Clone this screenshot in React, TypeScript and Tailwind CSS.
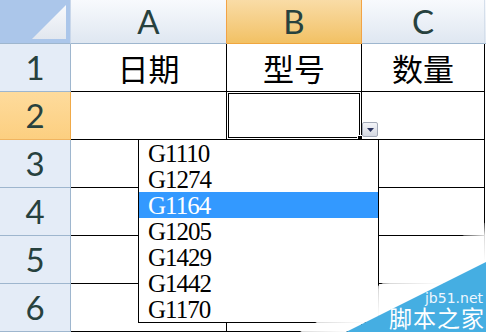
import React from "react";

const items = ["G1110", "G1274", "G1164", "G1205", "G1429", "G1442", "G1170"];

const hdrFont = { fontFamily: "Lato, 'Open Sans', sans-serif" } as React.CSSProperties;

function RowHeader({ n, sel }: { n: number; sel?: boolean }) {
  return (
    <div
      className={
        "flex items-center justify-center border-r border-b text-[33px] leading-none text-[#27413e] " +
        (sel
          ? "bg-gradient-to-b from-[#fedb9c] to-[#fccf80] border-r-[#f0a948] border-b-[#f0b460]"
          : "bg-[#e4ecf7] border-r-[#9eb6ce] border-b-[#9eb6ce]")
      }
      style={hdrFont}
    >
      {n}
    </div>
  );
}

function Cell({ children }: { children?: React.ReactNode }) {
  return (
    <div
      className="flex items-center justify-center border-r border-b border-black bg-white text-[31px] leading-none text-black"
      style={{ fontFamily: "'Noto Sans CJK SC', sans-serif" }}
    >
      {children}
    </div>
  );
}

export default function App() {
  return (
    <div className="relative w-[486px] h-[332px] overflow-hidden bg-white">
      <div className="grid grid-cols-[71px_156px_135px_123px_1fr] grid-rows-[44px_repeat(6,48px)]">
        {/* corner */}
        <div className="relative border-r border-b border-r-[#c9d7ea] border-b-[#9eb6ce] bg-[#abc6ea]">
          <svg className="absolute left-0 top-0" width="70" height="43" viewBox="0 0 70 43">
            <defs>
              <linearGradient id="tri" x1="0" y1="0" x2="0" y2="1">
                <stop offset="0" stopColor="#f7f9fc" />
                <stop offset="1" stopColor="#e2e7ef" />
              </linearGradient>
            </defs>
            <polygon points="32,39 66,5 66,39" fill="url(#tri)" />
          </svg>
        </div>
        {/* column headers */}
        <div
          className="flex items-center justify-center border-b border-r border-b-[#9eb6ce] border-r-[#f2a345] bg-gradient-to-b from-[#f8fafd] to-[#dfe7f1] text-[33px] leading-none text-[#27413e]"
          style={hdrFont}
        >
          A
        </div>
        <div
          className="flex items-center justify-center border-b border-r border-b-[#f0a63f] border-r-[#f2a345] bg-gradient-to-b from-[#f9dca6] to-[#f2c163] text-[33px] leading-none text-[#27413e]"
          style={hdrFont}
        >
          B
        </div>
        <div
          className="flex items-center justify-center border-b border-r border-b-[#9eb6ce] border-r-[#d5dfeb] bg-gradient-to-b from-[#f8fafd] to-[#dfe7f1] text-[33px] leading-none text-[#27413e]"
          style={hdrFont}
        >
          C
        </div>
        <div className="border-b border-b-[#9eb6ce] bg-gradient-to-b from-[#f8fafd] to-[#dfe7f1]" />

        {/* row 1 */}
        <RowHeader n={1} />
        <Cell>日期</Cell>
        <Cell>型号</Cell>
        <Cell>数量</Cell>
        <div />
        {/* rows 2-6 */}
        {[2, 3, 4, 5, 6].map((n) => (
          <React.Fragment key={n}>
            <RowHeader n={n} sel={n === 2} />
            <Cell />
            <Cell />
            <Cell />
            <div />
          </React.Fragment>
        ))}
      </div>

      {/* selection of B2 */}
      <div className="absolute left-[226px] top-[91px] w-[136px] h-[49px] border-[3px] border-double border-black" />
      <div className="absolute left-[357px] top-[135px] w-[6px] h-[6px] bg-black border border-white" />

      {/* dropdown button */}
      <div className="absolute left-[362px] top-[122px] w-[16px] h-[15px] rounded-[2px] border border-[#a3aab8] bg-gradient-to-b from-[#f3f4f8] to-[#d5d9e2] flex items-center justify-center">
        <svg width="7" height="4" viewBox="0 0 7 4">
          <polygon points="0,0 7,0 3.5,4" fill="#2c3560" />
        </svg>
      </div>

      {/* dropdown list */}
      <div
        className="absolute left-[138px] top-[139px] w-[241px] h-[184px] border border-black bg-white flex flex-col"
        style={{ fontFamily: "'Liberation Serif', serif" }}
      >
        {items.map((it, i) => (
          <div
            key={it}
            className={
              "h-[26px] shrink-0 flex items-center pl-[9px] text-[25px] leading-none tracking-[-1px] " +
              (i === 2 ? "bg-[#3399ff] text-white" : "text-black")
            }
          >
            {it}
          </div>
        ))}
      </div>

      {/* watermark */}
      <svg className="absolute left-0 top-0 pointer-events-none" width="486" height="332" viewBox="0 0 486 332">
        <defs>
          <linearGradient id="fringe" gradientUnits="userSpaceOnUse" x1="416" y1="297" x2="398" y2="262">
            <stop offset="0" stopColor="#ffffff" stopOpacity="1" />
            <stop offset="0.6" stopColor="#ffffff" stopOpacity="0.85" />
            <stop offset="1" stopColor="#ffffff" stopOpacity="0" />
          </linearGradient>
        </defs>
        <polygon points="486,222 486,263 346,332 300,332" fill="url(#fringe)" />
        <polygon points="486,262 486,332 346,332" fill="#45aee2" />
      </svg>
      <div
        className="absolute right-[3px] top-[291px] text-[14px] leading-[14px] text-[#eef7ff]"
        style={{ fontFamily: "'DejaVu Sans', sans-serif" }}
      >
        jb51.net
      </div>
      <div
        className="absolute right-[1px] top-[306px] text-[23px] leading-[23px] text-white tracking-[1px]"
        style={{ fontFamily: "'Noto Sans CJK SC', sans-serif" }}
      >
        脚本之家
      </div>
    </div>
  );
}
